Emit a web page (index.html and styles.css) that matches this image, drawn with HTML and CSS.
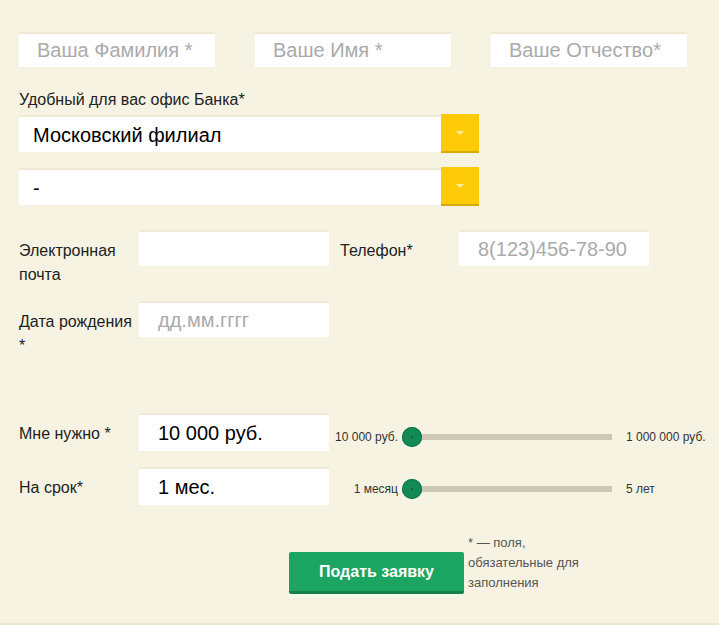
FILE: index.html
```html
<!DOCTYPE html>
<html lang="ru">
<head>
<meta charset="utf-8">
<title>Заявка</title>
<link rel="stylesheet" href="styles.css">
</head>
<body>
<form class="page">
  <div class="name-row">
    <input class="field field-name" type="text" placeholder="Ваша Фамилия *">
    <input class="field field-name" type="text" placeholder="Ваше Имя *">
    <input class="field field-name" type="text" placeholder="Ваше Отчество*">
  </div>

  <div class="office-label">Удобный для вас офис Банка*</div>
  <div class="select">
    <div class="select-value">Московский филиал</div>
    <div class="select-btn"><span class="arrow"></span></div>
  </div>
  <div class="select select-second">
    <div class="select-value">-</div>
    <div class="select-btn"><span class="arrow"></span></div>
  </div>

  <div class="row row-email">
    <label class="row-label">Электронная почта</label>
    <input class="field field-mid" type="text">
    <label class="phone-label">Телефон*</label>
    <input class="field field-mid" type="text" placeholder="8(123)456-78-90">
  </div>

  <div class="row row-date">
    <label class="row-label">Дата рождения *</label>
    <input class="field field-mid" type="text" placeholder="дд.мм.гггг">
  </div>

  <div class="row row-amount">
    <label class="row-label">Мне нужно *</label>
    <input class="field field-mid field-tall" type="text" value="10 000 руб.">
    <div class="slider">
      <span class="slider-min">10 000 руб.</span>
      <div class="track"><span class="knob"></span></div>
      <span class="slider-max">1 000 000 руб.</span>
    </div>
  </div>

  <div class="row row-term">
    <label class="row-label">На срок*</label>
    <input class="field field-mid field-tall" type="text" value="1 мес.">
    <div class="slider">
      <span class="slider-min">1 месяц</span>
      <div class="track"><span class="knob"></span></div>
      <span class="slider-max">5 лет</span>
    </div>
  </div>

  <div class="submit-row">
    <button class="submit" type="button">Подать заявку</button>
    <p class="note">* — поля, обязательные для заполнения</p>
  </div>
</form>
</body>
</html>
```

FILE: styles.css
```css
* { box-sizing: border-box; }

html, body {
  margin: 0;
  padding: 0;
  background: #f7f3e3;
}

body {
  font-family: "Liberation Sans", Arial, sans-serif;
  color: #2b2b2b;
}

.page {
  height: 625px;
  padding: 32px 0 0 19px;
  border-bottom: 2px solid #ece6d0;
}

.field {
  display: block;
  border: none;
  outline: none;
  background: #fff;
  box-shadow: inset 0 2px 0 #efe9d5;
  font-family: "Liberation Sans", Arial, sans-serif;
  font-size: 20px;
  color: #000;
  padding: 2px 0 0 18px;
  margin: 0;
}

.field::placeholder {
  color: #aaa;
  opacity: 1;
}

.name-row {
  display: flex;
  gap: 40px;
}

.field-name {
  width: 196px;
  height: 35px;
}

.office-label {
  margin-top: 23px;
  font-size: 16px;
  line-height: 20px;
  color: #222;
}

.select {
  display: flex;
  align-items: flex-start;
  margin-top: 4px;
  height: 39px;
}

.select-second {
  margin-top: 14px;
}

.select-value {
  width: 422px;
  height: 37px;
  margin-top: 1px;
  background: #fff;
  box-shadow: inset 0 2px 0 #efe9d5;
  font-size: 20px;
  line-height: 40px;
  padding-left: 14px;
  color: #000;
}

.select-btn {
  width: 38px;
  height: 39px;
  background: #fcca07;
  border-bottom: 2px solid #d6ab05;
  display: flex;
  align-items: center;
  justify-content: center;
}

.arrow {
  width: 0;
  height: 0;
  border-left: 4px solid transparent;
  border-right: 4px solid transparent;
  border-top: 4px solid #fdeaa2;
}

.row {
  display: flex;
  align-items: flex-start;
}

.row-label {
  width: 120px;
  padding-top: 9px;
  font-size: 16px;
  line-height: 24px;
  color: #222;
}

.field-mid {
  width: 190px;
  height: 36px;
  padding-left: 19px;
}

.field-tall {
  height: 38px;
}

.phone-label {
  width: 130px;
  padding: 9px 0 0 11px;
  font-size: 16px;
  line-height: 24px;
  color: #222;
}

.row-email { margin-top: 24px; }
.row-date { margin-top: 14px; }
.row-amount { margin-top: 55px; }
.row-term { margin-top: 6px; }

.row-amount .row-label,
.row-term .row-label {
  padding-top: 9px;
}

.slider {
  display: flex;
  align-items: center;
  height: 48px;
  font-size: 12px;
  color: #333;
}

.slider-min {
  width: 69px;
  text-align: right;
}

.track {
  position: relative;
  width: 210px;
  height: 6px;
  margin-left: 4px;
  background: #cdc8b3;
}

.track::before {
  content: "";
  position: absolute;
  left: 0;
  top: 0;
  width: 10px;
  height: 6px;
  background: #f7f3e3;
}

.knob {
  position: absolute;
  left: 0;
  top: -7px;
  width: 20px;
  height: 20px;
  border-radius: 50%;
  background: #138a56;
  box-shadow: inset 0 0 0 1px #0f774a;
}

.knob::after {
  content: "";
  position: absolute;
  left: 9px;
  top: 9px;
  width: 2px;
  height: 2px;
  border-radius: 50%;
  background: #0b5c38;
}

.slider-max {
  margin-left: 14px;
}

.row-term .slider { margin-top: -2px; }

.submit-row {
  display: flex;
  align-items: flex-start;
  margin-top: 20px;
  padding-left: 270px;
}

.submit {
  margin-top: 19px;
  width: 175px;
  height: 42px;
  border: none;
  border-bottom: 3px solid #15804d;
  border-radius: 2px;
  background: #1ba462;
  color: #fff;
  font-family: "Liberation Sans", Arial, sans-serif;
  font-weight: bold;
  font-size: 16px;
  padding: 0;
  box-shadow: 0 3px 2px #f0fbe6;
}

.note {
  margin: 0 0 0 4px;
  width: 120px;
  font-size: 13px;
  line-height: 20px;
  color: #555;
}
```
